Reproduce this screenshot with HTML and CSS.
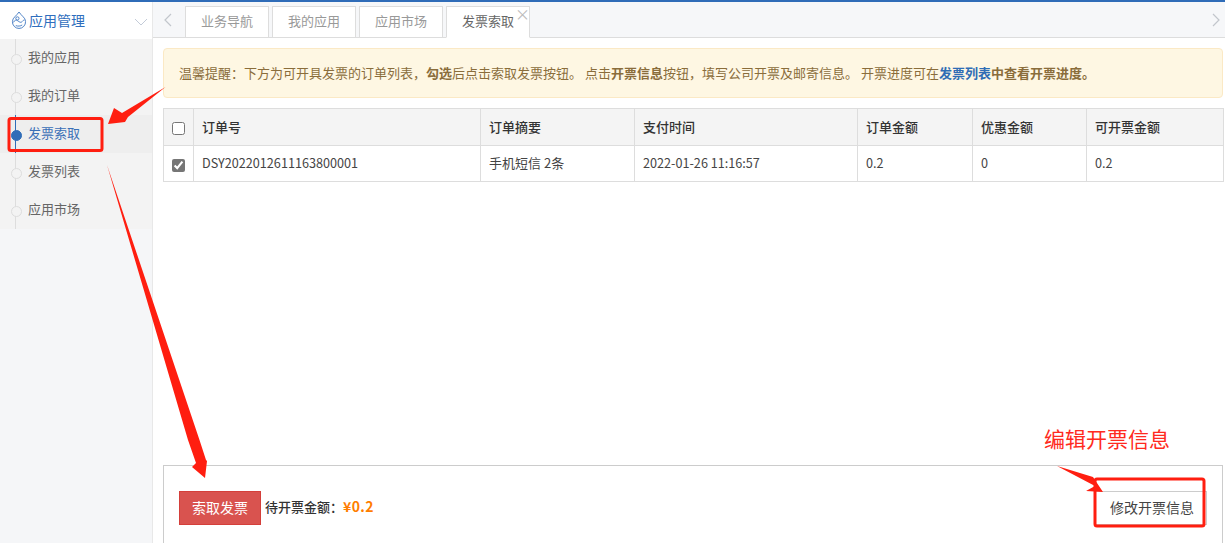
FILE: index.html
```html
<!DOCTYPE html>
<html lang="zh-CN">
<head>
<meta charset="utf-8">
<title>发票索取</title>
<link rel="stylesheet" href="styles.css">
</head>
<body>
<div class="app">
  <aside class="sidebar">
    <div class="side-head">
      <svg class="side-logo" width="16" height="18" viewBox="0 0 20 22" fill="none" stroke="#4a7fc4" stroke-width="1.200">
        <path d="M10 1C11.500 3.500 13.500 5 15.200 7A8.200 8.200 0 1 1 4.800 7C6.500 5 8.500 3.500 10 1Z"/>
        <path d="M3 14c1.500-3 3.500-3.500 5.500-2s3.500 2.500 4.800 1.500 1.700-2.200 3.500-2.500"/>
        <path d="M6 18c2.500 1 6 .8 8-.8"/>
        <circle cx="8" cy="9" r="2"/>
      </svg>
      <span class="side-title">应用管理</span>
      <svg class="side-chevron" width="14" height="8" viewBox="0 0 14 8" fill="none" stroke="#c3cbd8" stroke-width="1"><path d="M1 1l6 6 6-6"/></svg>
    </div>
    <ul class="menu">
      <li class="menu-item">我的应用</li>
      <li class="menu-item">我的订单</li>
      <li class="menu-item is-active">发票索取</li>
      <li class="menu-item">发票列表</li>
      <li class="menu-item">应用市场</li>
    </ul>
  </aside>
  <main class="main">
    <nav class="tabs">
      <svg class="tab-arrow" width="8" height="14" viewBox="0 0 8 14" fill="none" stroke="#c2c6cc" stroke-width="1.200"><path d="M7 1L1 7l6 6"/></svg>
      <div class="tab-list">
        <a class="tab">业务导航</a>
        <a class="tab">我的应用</a>
        <a class="tab">应用市场</a>
        <a class="tab is-current">发票索取<span class="tab-close">×</span></a>
      </div>
      <svg class="tab-arrow tab-arrow-right" width="8" height="14" viewBox="0 0 8 14" fill="none" stroke="#c2c6cc" stroke-width="1.200"><path d="M1 1l6 6-6 6"/></svg>
    </nav>
    <div class="content">
      <div class="notice">温馨提醒：下方为可开具发票的订单列表，<b>勾选</b>后点击索取发票按钮。 点击<b>开票信息</b>按钮，填写公司开票及邮寄信息。 开票进度可在<b class="notice-link">发票列表</b><b>中查看开票进度。</b></div>
      <table class="orders">
        <colgroup>
          <col class="col-check"><col class="col-no"><col class="col-desc"><col class="col-time"><col class="col-amt"><col class="col-off"><col class="col-rest">
        </colgroup>
        <thead>
          <tr><th class="cell-check"><input type="checkbox"></th><th>订单号</th><th>订单摘要</th><th>支付时间</th><th>订单金额</th><th>优惠金额</th><th>可开票金额</th></tr>
        </thead>
        <tbody>
          <tr><td class="cell-check"><input type="checkbox" checked></td><td>DSY2022012611163800001</td><td>手机短信 2条</td><td>2022-01-26 11:16:57</td><td>0.2</td><td>0</td><td>0.2</td></tr>
        </tbody>
      </table>
      <section class="footer-panel">
        <button class="btn-danger" type="button">索取发票</button>
        <span class="pending">待开票金额：<em class="pending-amt">¥0.2</em></span>
        <button class="btn-plain" type="button">修改开票信息</button>
      </section>
    </div>
  </main>
</div>
<svg class="marks" width="1225" height="543" viewBox="0 0 1225 543" fill="#ff1e10">
  <polygon points="165.500,87 122,113 114,108 108,124 125,122 128,117"/>
  <polygon points="107,165 199.500,440 206,460 207,461 205,478 192,467 196,463 188,440"/>
  <polygon points="1057,466 1093,477 1103,492 1086,491 1095,486"/>
  <rect class="mark-box" x="9" y="118.500" width="93" height="32" rx="2"/>
  <rect class="mark-box" x="1095" y="479" width="109" height="47" rx="2"/>
</svg>
<div class="mark-label">编辑开票信息</div>
</body>
</html>
```
FILE: styles.css
```css
* { box-sizing: border-box; }
html, body { margin: 0; padding: 0; height: 100%; overflow: hidden; background: #fff; }
body {
  font-family: "Noto Sans CJK SC", "Noto Sans", sans-serif;
  font-size: 13px;
  color: #444;
  position: relative;
}
.app {
  display: flex;
  height: 543px;
  border-top: 2px solid #2f6cb8;
}
.sidebar {
  flex: 0 0 153px;
  background: #f5f6f8;
  border-right: 1px solid #e8e8e8;
}
.side-head {
  height: 37px;
  background: #fff;
  display: flex;
  align-items: center;
  padding-left: 11px;
}
.side-logo { flex: none; margin-bottom: 1px; }
.side-title { font-size: 14px; color: #2f6ebd; margin-left: 2px; line-height: 20px; margin-bottom: 2px; }
.side-chevron { margin-left: auto; margin-right: 4px; margin-top: 2px; }
.menu {
  list-style: none;
  margin: 0;
  padding: 0;
  background: #f3f3f3;
}
.menu-item {
  position: relative;
  height: 38px;
  line-height: 36px;
  padding-left: 28px;
  color: #666;
}
.menu-item::before {
  content: "";
  position: absolute;
  left: 15px;
  top: 0;
  bottom: 0;
  width: 1px;
  background: #ddd;
}
.menu-item::after {
  content: "";
  position: absolute;
  left: 11px;
  top: 15px;
  width: 9px;
  height: 9px;
  border-radius: 50%;
  background: #f3f3f3;
  border: 1px solid #ddd;
}
.menu-item.is-active { background: #eee; color: #3a6fb7; }
.menu-item.is-active::before { background: #2f6cb8; }
.menu-item.is-active::after { background: #2f6cb8; border-color: #2f6cb8; }
.main {
  flex: 1;
  min-width: 0;
  display: flex;
  flex-direction: column;
}
.tabs {
  flex: none;
  height: 36px;
  display: flex;
  align-items: center;
  background: #f6f7f9;
  border-bottom: 1px solid #ddd;
  padding: 0 5px 0 11px;
}
.tab-list {
  display: flex;
  align-self: flex-end;
  gap: 3px;
  margin-left: 13px;
  margin-bottom: -1px;
}
.tab {
  position: relative;
  width: 84px;
  height: 32px;
  line-height: 28px;
  text-align: center;
  color: #999;
  background: #fff;
  border: 1px solid #ddd;
}
.tab.is-current { color: #666; border-bottom-color: #fff; }
.tab-close {
  position: absolute;
  right: -1px;
  top: -7px;
  font-size: 15px;
  color: #bbb;
}
.tab-arrow { flex: none; }
.tab-arrow-right { margin-left: auto; }
.content {
  flex: 1;
  min-height: 0;
  display: flex;
  flex-direction: column;
  padding: 10px 2px 0 10px;
}
.notice {
  flex: none;
  height: 50px;
  line-height: 48px;
  padding-left: 15px;
  background: #fef7e3;
  border: 1px solid #fbe9c5;
  border-radius: 4px;
  color: #8a6d3b;
  margin-bottom: 10px;
  white-space: nowrap;
}
.notice-link { color: #2f6db5; }
.orders {
  flex: none;
  width: 1060px;
  table-layout: fixed;
  border-collapse: collapse;
}
.col-check { width: 30px; }
.col-no { width: 287px; }
.col-desc { width: 154px; }
.col-time { width: 223px; }
.col-amt { width: 115px; }
.col-off { width: 114px; }
.col-rest { width: 137px; }
.orders th, .orders td {
  border: 1px solid #ddd;
  padding: 0 8px 2px;
  text-align: left;
  color: #444;
}
.orders th { height: 37px; background: #f4f4f4; font-weight: 500; color: #333; }
.orders td { height: 36px; font-size: 12.650px; }
.orders td:nth-child(3) { font-size: 13px; }
.orders .cell-check { padding: 0; text-align: center; }
.cell-check input {
  margin: 0;
  width: 13px;
  height: 13px;
  vertical-align: middle;
  accent-color: #767676;
}
.footer-panel {
  margin-top: auto;
  flex: none;
  height: 78px;
  display: flex;
  align-items: flex-start;
  padding: 25px 15px 0 15px;
  border: 1px solid #ccc;
  border-bottom: 0;
}
.btn-danger {
  flex: none;
  width: 82px;
  height: 34px;
  background: #d9534f;
  border: 1px solid #d43f3a;
  color: #fff;
  font: inherit;
  font-size: 14px;
  padding: 0 0 3px;
}
.pending {
  margin-left: 4px;
  line-height: 30px;
  color: #333;
  font-weight: 500;
}
.pending-amt { font-style: normal; font-weight: 700; font-size: 14px; letter-spacing: .4px; color: #ff7d00; }
.btn-plain {
  flex: none;
  margin-left: auto;
  width: 113px;
  height: 34px;
  background: #fff;
  border: 1px solid #ccc;
  color: #444;
  font: inherit;
  font-size: 14px;
  padding: 0 0 3px 3px;
}
.marks { position: absolute; left: 0; top: 0; pointer-events: none; }
.mark-box { fill: none; stroke: #ff1e10; stroke-width: 3; }
.mark-label {
  position: absolute;
  left: 1044px;
  top: 423px;
  font-size: 21px;
  line-height: 30px;
  font-weight: 400;
  color: #ff2a20;
  white-space: nowrap;
}
```
